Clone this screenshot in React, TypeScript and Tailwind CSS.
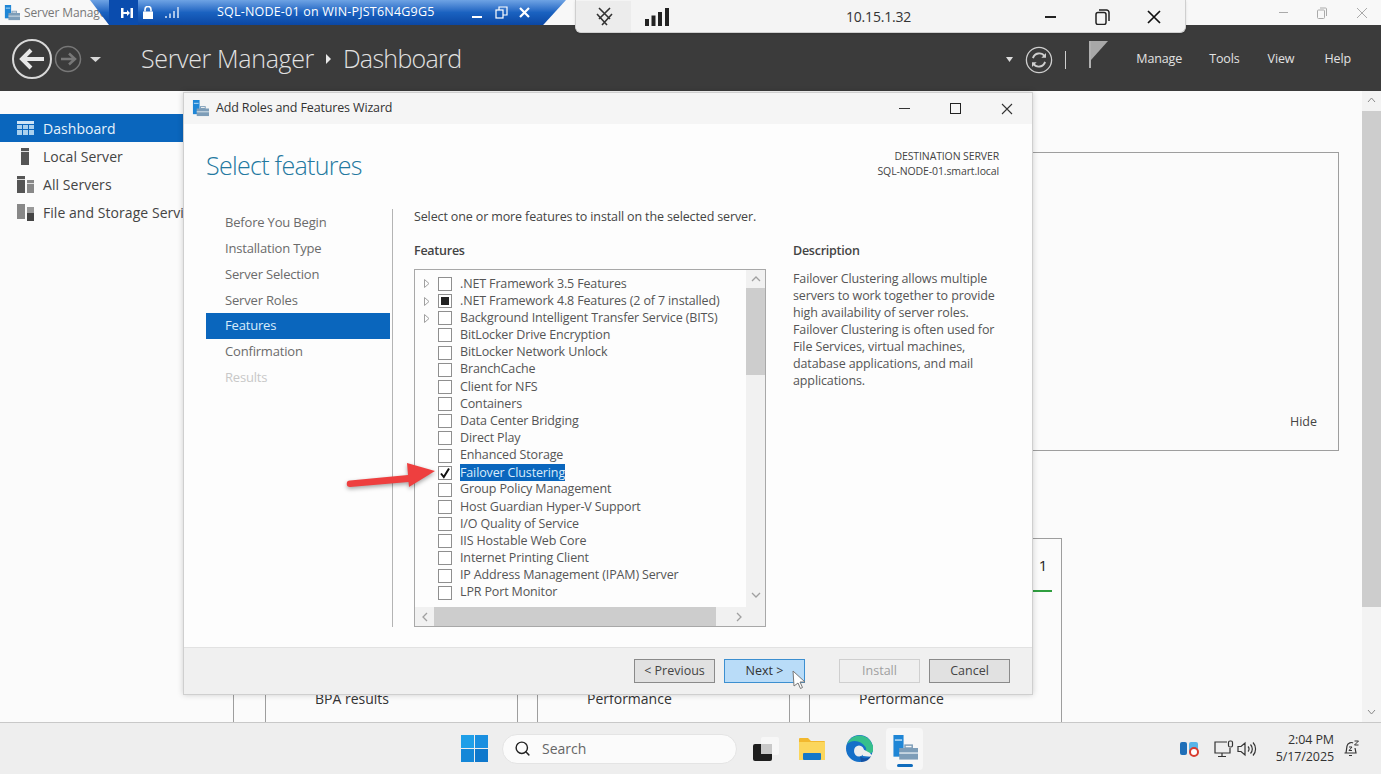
import { Search } from "lucide-react";

const features: { label: string; expand?: boolean; state?: "partial" | "checked" }[] = [
  { label: ".NET Framework 3.5 Features", expand: true },
  { label: ".NET Framework 4.8 Features (2 of 7 installed)", expand: true, state: "partial" },
  { label: "Background Intelligent Transfer Service (BITS)", expand: true },
  { label: "BitLocker Drive Encryption" },
  { label: "BitLocker Network Unlock" },
  { label: "BranchCache" },
  { label: "Client for NFS" },
  { label: "Containers" },
  { label: "Data Center Bridging" },
  { label: "Direct Play" },
  { label: "Enhanced Storage" },
  { label: "Failover Clustering", state: "checked" },
  { label: "Group Policy Management" },
  { label: "Host Guardian Hyper-V Support" },
  { label: "I/O Quality of Service" },
  { label: "IIS Hostable Web Core" },
  { label: "Internet Printing Client" },
  { label: "IP Address Management (IPAM) Server" },
  { label: "LPR Port Monitor" },
];

const steps = ["Before You Begin", "Installation Type", "Server Selection", "Server Roles", "Features", "Confirmation", "Results"];

const description = [
  "Failover Clustering allows multiple",
  "servers to work together to provide",
  "high availability of server roles.",
  "Failover Clustering is often used for",
  "File Services, virtual machines,",
  "database applications, and mail",
  "applications.",
];

function ServerManagerIcon({ size = 18 }: { size?: number }) {
  return (
    <svg width={size} height={size} viewBox="0 0 18 18">
      <rect x="1" y="0" width="7" height="15" fill="#1f86d6" />
      <rect x="2" y="3" width="5" height="1" fill="#bfe0f7" />
      <rect x="5" y="9" width="13" height="8" fill="#7d9db8" />
      <rect x="9" y="7" width="5" height="2" fill="none" stroke="#7d9db8" />
      <rect x="5" y="12" width="13" height="1" fill="#dbe6ee" />
    </svg>
  );
}

function Checkbox({ state }: { state?: "partial" | "checked" }) {
  return (
    <span className="w-[14px] h-[14px] border border-[#8f8f8f] bg-white flex items-center justify-center shrink-0">
      {state === "partial" && <span className="w-[8px] h-[8px] bg-[#222]" />}
      {state === "checked" && (
        <svg width="12" height="12" viewBox="0 0 12 12">
          <path d="M2 6.5 L4.8 10 L10 1.5" fill="none" stroke="#111" strokeWidth="2" />
        </svg>
      )}
    </span>
  );
}

function Tile({ label, count }: { label: string; count?: boolean }) {
  return (
    <div className="w-[253px] h-[184px] border-x border-t border-[#9e9e9e] relative flex flex-col justify-end pl-[49px] pb-[13px] text-[14px] text-[#333]">
      {count && (
        <div className="absolute right-[8px] top-[16px] w-[20px] flex flex-col items-center">
          <span className="text-[15px] leading-[20px] text-[#222]">1</span>
        </div>
      )}
      {count && <div className="absolute right-[9px] top-[51px] w-[20px] h-[2px] bg-[#2f9e3f]" />}
      {label}
    </div>
  );
}

function WizardButton({ children, className }: { children: string; className: string }) {
  return <button className={`w-[81px] h-[24px] border text-[12.5px] leading-[22px] text-center ${className}`}>{children}</button>;
}

export default function App() {
  return (
    <div className="relative w-[1381px] h-[774px] overflow-hidden bg-[#fbfbfb] flex flex-col font-['Open_Sans',sans-serif] text-[#444]">
      {/* server manager title bar */}
      <div className="h-[25px] shrink-0 flex items-center pl-[4px] bg-[#f8f8f8]">
        <ServerManagerIcon size={16} />
        <span className="ml-[4px] text-[12px] tracking-[-0.1px] text-[#777]">Server Manager</span>
        <div className="ml-auto mr-[13px] flex items-center gap-[28px] text-[#9a9a9a]">
          <span className="w-[9px] h-[1px] bg-[#aaa]" />
          <svg width="12" height="12" viewBox="0 0 12 12" fill="none" stroke="#aaa">
            <rect x="1.5" y="3" width="7" height="8.5" rx="1" />
            <path d="M4 1 H9.5 a1 1 0 0 1 1 1 V9" />
          </svg>
          <svg width="12" height="12" viewBox="0 0 12 12" stroke="#aaa">
            <path d="M1 1 L11 11 M11 1 L1 11" />
          </svg>
        </div>
      </div>

      {/* dark header */}
      <div className="h-[66px] shrink-0 bg-[#3b3b3b] flex items-center pl-[12px] pt-[2px] text-[#e2e2e2]">
        <svg width="92" height="42" viewBox="0 0 92 42" fill="none">
          <circle cx="20" cy="21" r="19" stroke="#d8d8d8" strokeWidth="2" />
          <path d="M32 21 H11 M19 12 L10 21 L19 30" stroke="#e8e8e8" strokeWidth="4" />
          <circle cx="56" cy="21" r="12.5" stroke="#777" strokeWidth="1.5" />
          <path d="M49 21 H62 M57 15.5 L63 21 L57 26.5" stroke="#777" strokeWidth="2.5" />
          <path d="M78 19 H89 L83.5 24 Z" fill="#d8d8d8" />
        </svg>
        <div className="ml-[37px] flex items-center text-[25px] font-light tracking-[-0.35px] text-[#e2e2e2]">
          <span>Server Manager</span>
          <svg className="mx-[11px]" width="7" height="10" viewBox="0 0 7 10">
            <path d="M1 0 L6 5 L1 10 Z" fill="#e8e8e8" />
          </svg>
          <span className="tracking-[-0.7px]">Dashboard</span>
        </div>
        <div className="ml-auto flex items-center h-full pt-[1px] pr-[30px] text-[12.5px] tracking-[-0.12px]">
          <svg width="7" height="5" viewBox="0 0 7 5">
            <path d="M0 0 H7 L3.5 5 Z" fill="#ddd" />
          </svg>
          <svg className="ml-[12px]" width="28" height="28" viewBox="0 0 30 30" fill="none" stroke="#cfcfcf">
            <circle cx="15" cy="15" r="13.5" strokeWidth="1.4" />
            <path d="M8.5 13 a7 7 0 0 1 12.5 -2 M21.5 17 a7 7 0 0 1 -12.5 2" strokeWidth="2" />
            <path d="M22.5 7.5 V12.5 H17.5 Z M7.5 22.5 V17.5 H12.5 Z" fill="#cfcfcf" stroke="none" />
          </svg>
          <span className="ml-[12px] w-[1px] h-[18px] bg-[#cfcfcf]" />
          <svg className="ml-[23px] -mt-[10px]" width="19" height="27" viewBox="0 0 19 27">
            <rect x="0" y="0" width="2" height="27" fill="#b0b0b0" />
            <path d="M2 0 H19 L2 19 Z" fill="#a8a8a8" />
          </svg>
          <span className="ml-[28px]">Manage</span>
          <span className="ml-[27px]">Tools</span>
          <span className="ml-[28px]">View</span>
          <span className="ml-[30px]">Help</span>
        </div>
      </div>

      {/* body */}
      <div className="flex-1 flex min-h-0">
        <div className="w-[184px] shrink-0 pt-[23px] text-[14px] tracking-[0.05px] text-[#444]">
          <div className="h-[28px] flex items-center bg-[#0a66bd] text-[#e6f2fb] whitespace-nowrap">
            <svg className="ml-[17px] mr-[9px] shrink-0" width="17" height="14" viewBox="0 0 17 14">
              <rect width="17" height="3" fill="#cfe5f6" />
              <path d="M0 4 H5 V8 H0 Z M6 4 H11 V8 H6 Z M12 4 H17 V8 H12 Z M0 9 H5 V14 H0 Z M6 9 H11 V14 H6 Z M12 9 H17 V14 H12 Z" fill="#a9d0ee" />
            </svg>
            Dashboard
          </div>
          <div className="h-[28px] flex items-center whitespace-nowrap">
            <svg className="ml-[17px] mr-[9px] shrink-0" width="17" height="17" viewBox="0 0 17 17">
              <rect x="4" y="0" width="8" height="17" fill="#555" />
              <rect x="4" y="3" width="8" height="1" fill="#ddd" />
            </svg>
            Local Server
          </div>
          <div className="h-[28px] flex items-center whitespace-nowrap">
            <svg className="ml-[17px] mr-[9px] shrink-0" width="17" height="17" viewBox="0 0 17 17">
              <rect x="0" y="0" width="8" height="17" fill="#555" />
              <rect x="0" y="3" width="8" height="1" fill="#ddd" />
              <rect x="10" y="4" width="7" height="13" fill="#888" />
              <rect x="10" y="7" width="7" height="1" fill="#ddd" />
            </svg>
            All Servers
          </div>
          <div className="h-[28px] flex items-center whitespace-nowrap">
            <svg className="ml-[17px] mr-[9px] shrink-0" width="17" height="17" viewBox="0 0 17 17">
              <rect x="0" y="0" width="8" height="15" fill="#888" />
              <rect x="10" y="3" width="7" height="6" fill="#999" />
              <rect x="10" y="9" width="7" height="8" fill="#444" />
            </svg>
            File and Storage Services
          </div>
        </div>

        <div className="flex-1 min-w-0 pt-[61px] pl-[49px] overflow-hidden">
          <div className="w-[1106px] h-[299px] border border-[#9e9e9e] flex items-end justify-end pr-[21px] pb-[18px] text-[12.5px] text-[#444]">
            Hide
          </div>
          <div className="mt-[87px] w-[829px] border-l border-[#9e9e9e] pl-[31px] flex gap-[19px]">
            <Tile label="BPA results" />
            <Tile label="Performance" />
            <Tile label="Performance" count />
          </div>
        </div>

        <div className="w-[19px] shrink-0 bg-[#f3f3f3] flex flex-col items-center pt-[6px]">
          <svg width="9" height="6" viewBox="0 0 9 6" fill="none" stroke="#8a8a8a">
            <path d="M1 5 L4.5 1 L8 5" />
          </svg>
          <div className="mt-[8px] w-full h-[496px] bg-[#cdcdcd]" />
          <svg className="mt-[102px]" width="9" height="6" viewBox="0 0 9 6" fill="none" stroke="#8a8a8a">
            <path d="M1 1 L4.5 5 L8 1" />
          </svg>
        </div>
      </div>

      {/* taskbar */}
      <div className="h-[52px] shrink-0 bg-[#eeeeee] border-t border-[#c8c8c8] flex items-center pl-[461px] pr-[21px]">
        <svg width="27" height="27" viewBox="0 0 27 27">
          <rect width="13" height="13" fill="#1f9fe8" />
          <rect x="14" width="13" height="13" fill="#1a8fe0" />
          <rect y="14" width="13" height="13" fill="#1487d8" />
          <rect x="14" y="14" width="13" height="13" fill="#0f78cc" />
        </svg>
        <div className="ml-[14px] w-[235px] h-[30px] rounded-full bg-[#fbfbfb] border border-[#e4e4e4] flex items-center pl-[11px] text-[14px] text-[#666]">
          <Search size={17} strokeWidth={2} className="text-[#222]" />
          <span className="ml-[11px]">Search</span>
        </div>
        <svg className="ml-[15px]" width="28" height="26" viewBox="0 0 28 26">
          <rect x="9" y="1" width="18" height="18" rx="2" fill="#f7f7f7" />
          <rect x="1" y="8" width="19" height="17" rx="2" fill="#1e1e1e" />
          <rect x="9" y="8" width="11" height="10" fill="#c9c9c9" />
        </svg>
        <svg className="ml-[19px]" width="26" height="24" viewBox="0 0 26 24">
          <path d="M0 2 a1 1 0 0 1 1 -1 H9 L12 4 H25 a1 1 0 0 1 1 1 V23 H0 Z" fill="#f2b82e" />
          <rect x="0" y="5" width="26" height="18" fill="#fbd65c" />
          <rect x="4" y="16" width="18" height="7" rx="1" fill="#1478c8" />
        </svg>
        <svg className="ml-[21px]" width="27" height="27" viewBox="0 0 27 27">
          <circle cx="13.5" cy="13.5" r="13.5" fill="#1670c8" />
          <path d="M1 9 a13.5 13.5 0 0 1 25.5 1 a6 6 0 0 1 -1 8 h-8 a4 4 0 0 0 2 -6 C15 5 6 4 1 9 Z" fill="#36bf8c" />
          <ellipse cx="13" cy="16" rx="5" ry="5.5" fill="#eeeeee" />
          <path d="M13 12 L24 18 L27 22 L17 21 Z" fill="#eeeeee" />
          <path d="M14 21 C18 25 23 23 25 21 C24 24 20 27 15 27 Z" fill="#1452a4" />
        </svg>
        <div className="ml-[13px] w-[37px] h-[42px] rounded-[4px] bg-[#f7f7f7] flex flex-col items-center pt-[7px]">
          <ServerManagerIcon size={26} />
          <span className="mt-[3px] w-[16px] h-[3px] rounded-full bg-[#0f6cbd]" />
        </div>
        <div className="ml-auto flex items-center text-[#333]">
          <svg width="20" height="16" viewBox="0 0 20 16">
            <rect x="0" y="1" width="7" height="13" rx="2" fill="#1f6fb8" />
            <rect x="9" y="1" width="9" height="10" rx="2" fill="#58b4e8" />
            <circle cx="14" cy="11" r="4" fill="#fff" stroke="#d83b2e" strokeWidth="2" />
          </svg>
          <svg className="ml-[14px]" width="20" height="18" viewBox="0 0 20 18" fill="none" stroke="#333" strokeWidth="1.2">
            <path d="M13 2 H1 V13 H16 V8 M8 13 V16 M4 16.5 H12" />
            <rect x="14.5" y="1" width="4" height="6" rx="1.5" />
          </svg>
          <svg className="ml-[3px]" width="20" height="16" viewBox="0 0 20 16" fill="none" stroke="#333" strokeWidth="1.2">
            <path d="M1 5.5 H4 L8 2 V14 L4 10.5 H1 Z M11 5.5 a3.5 3.5 0 0 1 0 5 M13.5 3.5 a6.5 6.5 0 0 1 0 9 M16 1.5 a9.5 9.5 0 0 1 0 13" />
          </svg>
          <div className="ml-[17px] -mt-[2px] w-[60px] text-right text-[12.5px] leading-[17px] tracking-[-0.1px] text-[#333] whitespace-nowrap">
            <div>2:04 PM</div>
            <div>5/17/2025</div>
          </div>
          <svg className="ml-[9px]" width="17" height="17" viewBox="0 0 17 17" fill="none" stroke="#333" strokeWidth="1.2">
            <path d="M3 13 L4 6 C4.5 2.5 9 2 10 3 M1.5 13 H13 L12 8 M6 15.5 H9" />
            <path d="M6 7 H9 L6 10.5 H9 M11.5 1 H15.5 L11.5 5 H15.5" strokeWidth="1" />
          </svg>
        </div>
      </div>

      {/* remote session connection bar */}
      <div className="absolute left-[90px] top-0 w-[476px] h-[25px] bg-gradient-to-b from-[#6ea3e4] via-[#1a62c0] to-[#0b47a4] [clip-path:polygon(0_0,100%_0,95.2%_100%,4%_100%)] flex items-center text-white">
        <div className="ml-[19px] w-[29px] h-full bg-[#0a4cae] flex items-center justify-end pr-[5px]">
          <svg width="12" height="10" viewBox="0 0 12 10" fill="#fff">
            <path d="M0 0 H2.5 V10 H0 Z M9.5 0 H12 V10 H9.5 Z M2.5 4 H6 V2 L9 5 L6 8 V6 H2.5 Z" />
          </svg>
        </div>
        <svg className="ml-[4px]" width="12" height="13" viewBox="0 0 12 13" fill="#fff">
          <path d="M1 5.5 H11 V13 H1 Z" />
          <path d="M3 5.5 V3.5 a3 3 0 0 1 6 0 V5.5" fill="none" stroke="#fff" strokeWidth="1.6" />
        </svg>
        <svg className="ml-[11px]" width="14" height="11" viewBox="0 0 14 11" fill="#a9c4e8">
          <path d="M0 9 H2 V11 H0 Z M4 6.5 H6 V11 H4 Z M8 4 H10 V11 H8 Z M12 0 H14 V11 H12 Z" />
        </svg>
        <span className="ml-[38px] w-[215px] text-[12.5px] tracking-[0.2px] whitespace-nowrap">SQL-NODE-01 on WIN-PJST6N4G9G5</span>
        <span className="ml-[40px] w-[10px] h-[2px] bg-white self-end mb-[7px]" />
        <svg className="ml-[13px]" width="13" height="13" viewBox="0 0 13 13" fill="none" stroke="#fff" strokeWidth="1.2">
          <rect x="1" y="4" width="7" height="8" />
          <path d="M4 4 V1 H12 V9 H8" />
        </svg>
        <svg className="ml-[11px]" width="11" height="11" viewBox="0 0 11 11" stroke="#fff" strokeWidth="2.2">
          <path d="M1 1 L10 10 M10 1 L1 10" />
        </svg>
      </div>

      {/* client connection bar */}
      <div className="absolute left-[575px] top-0 w-[611px] h-[33px] pt-[1px] bg-[#f4f4f4] border border-[#cfcfcf] border-t-0 rounded-b-[6px] shadow-sm flex items-center text-[#222]">
        <div className="w-[55px] h-full rounded-bl-[6px] bg-[#ececec] flex items-center justify-center pl-[2px]">
          <svg width="19" height="19" viewBox="0 0 19 19" fill="none" stroke="#333" strokeWidth="1.6">
            <path d="M4 1 L15 12 M15 1 L4 12 M2 7 L12 18 M17 7 L7 18" />
          </svg>
        </div>
        <svg className="ml-[14px]" width="24" height="18" viewBox="0 0 24 18" fill="#222">
          <path d="M0 11 H4 V18 H0 Z M6.5 7.5 H10.5 V18 H6.5 Z M13 4 H17 V18 H13 Z M20 0 H24 V18 H20 Z" />
        </svg>
        <span className="ml-[177px] w-[100px] text-[14px] tracking-[-0.2px] text-[#333]">10.15.1.32</span>
        <span className="ml-[99px] w-[11px] h-[2px] bg-[#222]" />
        <svg className="ml-[39px]" width="15" height="16" viewBox="0 0 15 16" fill="none" stroke="#222" strokeWidth="1.5">
          <rect x="1" y="3.5" width="10" height="12" rx="2" />
          <path d="M4 1 H11.5 a2.5 2.5 0 0 1 2.5 2.5 V12" />
        </svg>
        <svg className="ml-[37px]" width="14" height="14" viewBox="0 0 14 14" stroke="#111" strokeWidth="1.7">
          <path d="M1 1 L13 13 M13 1 L1 13" />
        </svg>
      </div>

      {/* wizard window */}
      <div className="absolute left-[183px] top-[92px] w-[850px] h-[603px] bg-[#fdfdfd] border border-[#cfcfcf] shadow-[0_0_6px_rgba(0,0,0,0.18)] flex flex-col">
        <div className="h-[31px] shrink-0 bg-[#f5f5f5] flex items-center pl-[8px] pr-[19px] text-[12.5px] tracking-[-0.15px] text-[#333]">
          <ServerManagerIcon size={17} />
          <span className="ml-[7px]">Add Roles and Features Wizard</span>
          <span className="ml-auto w-[11px] h-[1px] bg-[#333]" />
          <span className="ml-[40px] w-[11px] h-[11px] border border-[#222]" />
          <svg className="ml-[40px]" width="12" height="12" viewBox="0 0 12 12" stroke="#333" strokeWidth="1.1">
            <path d="M1 1 L11 11 M11 1 L1 11" />
          </svg>
        </div>

        <div className="h-[85px] shrink-0 flex justify-between pl-[22px] pr-[33px]">
          <h1 className="mt-[24px] text-[25px] leading-[34px] font-light tracking-[-0.7px] text-[#23789f]">Select features</h1>
          <div className="mt-[25px] text-right text-[10.5px] leading-[15px] tracking-[-0.12px] text-[#444]">
            <div>DESTINATION SERVER</div>
            <div>SQL-NODE-01.smart.local</div>
          </div>
        </div>

        <div className="h-[418px] shrink-0 flex">
          <div className="ml-[22px] w-[187px] border-r border-[#b4b4b4] pr-[2px] pt-[1px] text-[13px] tracking-[-0.18px]">
            {steps.map((step) => (
              <div
                key={step}
                className={
                  step === "Features"
                    ? "h-[25.8px] flex items-center pl-[19px] bg-[#0a66bd] text-[#d9ecfb]"
                    : step === "Results"
                      ? "h-[25.8px] flex items-center pl-[19px] text-[#c8c8c8]"
                      : "h-[25.8px] flex items-center pl-[19px] text-[#6b6b6b]"
                }
              >
                {step}
              </div>
            ))}
          </div>

          <div className="ml-[21px] flex-1 min-w-0">
            <div className="h-[16px] text-[12.5px] leading-[16px] tracking-[-0.13px] text-[#444]">Select one or more features to install on the selected server.</div>
            <div className="mt-[18px] flex gap-[27px]">
              <div className="w-[352px]">
                <div className="h-[16px] text-[12.5px] leading-[16px] font-semibold tracking-[-0.25px] text-[#444]">Features</div>
                <div className="mt-[10px] h-[358px] border border-[#a8a8a8] flex flex-col">
                  <div className="flex-1 min-h-0 flex">
                    <div className="flex-1 min-w-0 pt-[5.4px] text-[12.5px] tracking-[-0.14px] text-[#555]">
                      {features.map((item) => (
                        <div key={item.label} className="h-[17.17px] flex items-center whitespace-nowrap">
                          <span className="w-[23px] pl-[9px] shrink-0">
                            {item.expand && (
                              <svg width="6" height="9" viewBox="0 0 6 9" fill="none" stroke="#a0a0a0">
                                <path d="M0.5 0.5 L5 4.5 L0.5 8.5 Z" />
                              </svg>
                            )}
                          </span>
                          <Checkbox state={item.state} />
                          <span
                            className={
                              item.state === "checked"
                                ? "ml-[8px] h-[17px] leading-[17px] bg-[#0a66bd] text-[#d9ecfb]"
                                : "ml-[8px]"
                            }
                          >
                            {item.label}
                          </span>
                        </div>
                      ))}
                    </div>
                    <div className="w-[19px] shrink-0 bg-[#f1f1f1] flex flex-col items-center pt-[6px]">
                      <svg width="10" height="6" viewBox="0 0 10 6" fill="none" stroke="#a0a0a0" strokeWidth="1.3">
                        <path d="M1 5 L5 1 L9 5" />
                      </svg>
                      <div className="mt-[6px] w-full h-[87px] bg-[#cdcdcd]" />
                      <svg className="mt-[217px]" width="10" height="6" viewBox="0 0 10 6" fill="none" stroke="#a0a0a0" strokeWidth="1.3">
                        <path d="M1 1 L5 5 L9 1" />
                      </svg>
                    </div>
                  </div>
                  <div className="h-[19px] shrink-0 bg-[#f1f1f1] flex items-center">
                    <svg className="ml-[7px]" width="6" height="10" viewBox="0 0 6 10" fill="none" stroke="#a0a0a0" strokeWidth="1.3">
                      <path d="M5 1 L1 5 L5 9" />
                    </svg>
                    <div className="ml-[6px] w-[282px] h-full bg-[#cdcdcd]" />
                    <svg className="ml-[20px]" width="6" height="10" viewBox="0 0 6 10" fill="none" stroke="#a0a0a0" strokeWidth="1.3">
                      <path d="M1 1 L5 5 L1 9" />
                    </svg>
                  </div>
                </div>
              </div>
              <div className="flex-1">
                <div className="h-[16px] text-[12.5px] leading-[16px] font-semibold tracking-[-0.25px] text-[#444]">Description</div>
                <div className="mt-[11px] text-[12.5px] leading-[17px] tracking-[-0.12px] text-[#555] whitespace-nowrap">
                  {description.map((line) => (
                    <div key={line}>{line}</div>
                  ))}
                </div>
              </div>
            </div>
          </div>
        </div>

        <div className="mt-auto h-[47px] shrink-0 bg-[#f0f0f0] border-t border-[#e2e2e2] flex items-start pt-[11px] pl-[450px] text-[#444]">
          <WizardButton className="border-[#8a8a8a] bg-[#e1e1e1] text-[#444]">{"< Previous"}</WizardButton>
          <WizardButton className="ml-[9px] border-[#3c8fd0] bg-[#b9dcf8] text-[#333]">{"Next >"}</WizardButton>
          <WizardButton className="ml-[34px] border-[#cfcfcf] bg-[#efefef] text-[#a0a0a0]">Install</WizardButton>
          <WizardButton className="ml-[9px] border-[#8a8a8a] bg-[#e1e1e1] text-[#444]">Cancel</WizardButton>
        </div>
      </div>

      {/* red annotation arrow */}
      <svg className="absolute left-[340px] top-[458px] drop-shadow-[0_2px_2px_rgba(0,0,0,0.35)]" width="100" height="36" viewBox="0 0 100 36">
        <path d="M10 22.5 L68 17 L67 5 L95 13 L69 29 L68.5 24 L10 29 a3 3 0 0 1 0 -6.5 Z" fill="#ee3f3f" />
      </svg>

      {/* mouse pointer */}
      <svg className="absolute left-[792px] top-[670px]" width="14" height="19" viewBox="0 0 14 19">
        <path d="M1 1 L13 12 H8 L10.5 17.5 L8.5 18.5 L6 13 L2 16 Z" fill="#fff" stroke="#777" />
      </svg>
    </div>
  );
}
